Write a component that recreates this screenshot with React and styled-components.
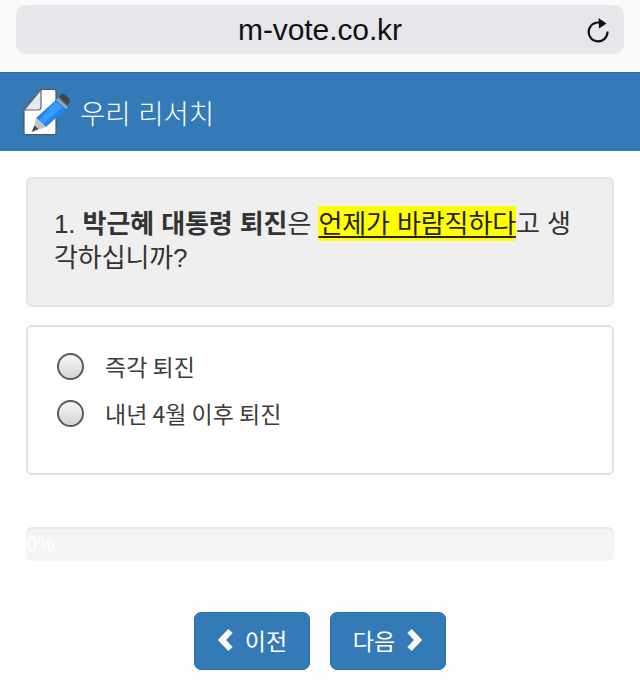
import React from "react";
import styled, { createGlobalStyle } from "styled-components";

const Global = createGlobalStyle`
  html, body { margin: 0; padding: 0; background: #fff; }
  body { font-family: "Liberation Sans", "Noto Sans CJK KR", sans-serif; color: #333; }
`;

const Page = styled.div`
  width: 640px;
  height: 696px;
  overflow: hidden;
  display: flex;
  flex-direction: column;
  background: #fefefe;
`;

const BrowserBar = styled.div`
  height: 72px;
  box-sizing: border-box;
  padding: 5px 16px 0;
  background: #f9f9fa;
  flex: none;
`;

const UrlPill = styled.div`
  height: 49px;
  border-radius: 10px;
  background: #e7e7eb;
  display: flex;
  align-items: center;
  justify-content: center;
  position: relative;
  font-size: 30px;
  letter-spacing: -0.1px;
  color: #111;
`;

const Reload = styled.svg`
  position: absolute;
  right: 13px;
  top: 12px;
  width: 26px;
  height: 26px;
`;

const Header = styled.header`
  height: 79px;
  flex: none;
  box-sizing: border-box;
  border-top: 1px solid #2e6da4;
  background: #337ab7;
  display: flex;
  align-items: center;
  padding: 0 0 0 22px;
  gap: 10px;
  color: #fff;
  font-size: 27.5px;
  font-weight: 300;
`;

const Content = styled.main`
  display: flex;
  flex-direction: column;
  padding: 26px 26px 0;
`;

const Question = styled.section`
  box-sizing: border-box;
  height: 130px;
  padding: 28px 26px;
  background: #efefef;
  border: 2px solid #e4e4e4;
  border-radius: 6px;
  font-size: 26px;
  line-height: 34px;
  color: #333;
  letter-spacing: -0.1px;
`;

const Mark = styled.span`
  background: #ffff00;
  padding: 3px 0 2px;
  text-decoration: underline;
  text-underline-offset: 3px;
  color: #222;
`;

const Options = styled.section`
  box-sizing: border-box;
  margin-top: 18px;
  height: 150px;
  padding: 25px 29px;
  border: 2px solid #e2e2e2;
  border-radius: 6px;
  background: #fff;
  display: flex;
  flex-direction: column;
  gap: 19px;
`;

const Option = styled.label`
  display: flex;
  align-items: center;
  gap: 21px;
  height: 28px;
  font-family: "Noto Sans CJK KR", "Liberation Sans", sans-serif;
  font-size: 23px;
  font-weight: 400;
  color: #3c3c3c;
`;

const Radio = styled.span`
  box-sizing: border-box;
  width: 27px;
  height: 27px;
  flex: none;
  border-radius: 50%;
  border: 2px solid #5a5a5a;
  background: linear-gradient(#f7f7f7, #d4d4d4);
`;

const Progress = styled.div`
  margin-top: 52px;
  height: 34px;
  box-sizing: border-box;
  border-radius: 6px;
  background: #f5f5f5;
  box-shadow: inset 0 2px 2px rgba(0, 0, 0, 0.05);
  overflow: hidden;
  display: flex;
  align-items: center;
  color: #fff;
  font-size: 20px;
`;

const Buttons = styled.div`
  margin-top: 51px;
  display: flex;
  justify-content: center;
  gap: 20px;
`;

const Button = styled.button`
  box-sizing: border-box;
  width: 116px;
  height: 58px;
  border: 1px solid #2e6da4;
  border-radius: 7px;
  background: #337ab7;
  color: #fff;
  font-family: inherit;
  font-size: 23px;
  display: flex;
  align-items: center;
  justify-content: center;
  gap: 11px;
  padding: 0 0 3px;
`;

const Chevron = ({ dir }) => (
  <svg width="17" height="24" viewBox="0 0 17 24">
    <path
      d={dir === "left" ? "M13.5 3 L5 12 L13.5 21" : "M3.5 3 L12 12 L3.5 21"}
      fill="none"
      stroke="#fff"
      strokeWidth="6"
      strokeLinejoin="miter"
    />
  </svg>
);

const Logo = () => (
  <svg width="48" height="48" viewBox="0 0 48 48">
    <path d="M2 22 L19 1.5 H32 Q34 1.5 34 3.5 V45 Q34 46.5 32 46.5 H3.5 Q2 46.5 2 45 Z" fill="#fff" stroke="#555" strokeWidth="1.2" />
    <path d="M2 22 L19 1.5 V19 Q19 22 16 22 Z" fill="#e8e8e8" stroke="#666" strokeWidth="1.2" />
    <path d="M36 10 L46 19 L24 39 L14 30 Z" fill="#1f86f0" />
    <path d="M33 13 L40 19.5 L21 36.5 L17 33 Z" fill="#3a9bff" />
    <path d="M36 10 L46 19 L44 21 L34 12 Z" fill="#a5a5a5" />
    <path d="M37 8.5 L39 6.5 Q41 5 43 6.5 L46.5 10 Q48.5 12 47 14.5 L45.5 17.5 Z" fill="#444" />
    <path d="M14 30 L24 39 L11 43.5 Z" fill="#c4c4c4" />
    <path d="M12.5 37.5 L16.5 41 L9.5 44 Z" fill="#444" />
  </svg>
);

export default function App() {
  return (
    <Page>
      <Global />
      <BrowserBar>
        <UrlPill>
          m-vote.co.kr
          <Reload viewBox="0 0 26 26">
            <path d="M19 7.6 A9.4 9.4 0 1 0 22.5 14.5" fill="none" stroke="#111" strokeWidth="2.2" />
            <path d="M13.5 1 L21.5 6.5 L14 11.5 Z" fill="#111" />
          </Reload>
        </UrlPill>
      </BrowserBar>
      <Header>
        <Logo />
        <span>우리 리서치</span>
      </Header>
      <Content>
        <Question>
          1. <b>박근혜 대통령 퇴진</b>은 <Mark>언제가 바람직하다</Mark>고 생각하십니까?
        </Question>
        <Options>
          <Option><Radio />즉각 퇴진</Option>
          <Option><Radio />내년 4월 이후 퇴진</Option>
        </Options>
        <Progress>0%</Progress>
        <Buttons>
          <Button><Chevron dir="left" />이전</Button>
          <Button>다음<Chevron dir="right" /></Button>
        </Buttons>
      </Content>
    </Page>
  );
}
